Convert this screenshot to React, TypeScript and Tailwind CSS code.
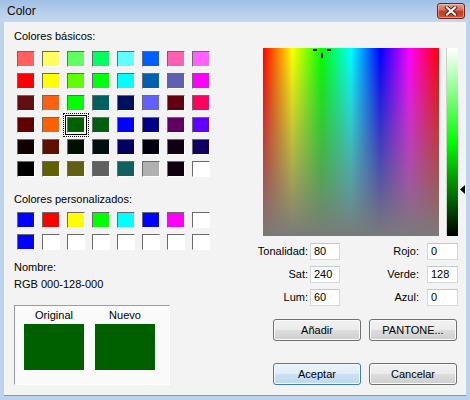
import React from "react";

const basic: string[][] = [
  ["bg-[#ff6060]", "bg-[#ffff60]", "bg-[#60ff60]", "bg-[#00ff60]", "bg-[#60ffff]", "bg-[#0060ff]", "bg-[#ff60b0]", "bg-[#ff60ff]"],
  ["bg-[#ff0000]", "bg-[#ffff00]", "bg-[#60ff00]", "bg-[#00ff10]", "bg-[#00ffff]", "bg-[#0060b0]", "bg-[#6060b0]", "bg-[#ff00ff]"],
  ["bg-[#601010]", "bg-[#ff6010]", "bg-[#00ff00]", "bg-[#006060]", "bg-[#001060]", "bg-[#6060ff]", "bg-[#600010]", "bg-[#ff0060]"],
  ["bg-[#600000]", "bg-[#ff6000]", "bg-[#006000]", "bg-[#006010]", "bg-[#0000ff]", "bg-[#000088]", "bg-[#600060]", "bg-[#6000ff]"],
  ["bg-[#100000]", "bg-[#601000]", "bg-[#001000]", "bg-[#001010]", "bg-[#000060]", "bg-[#000010]", "bg-[#100010]", "bg-[#100060]"],
  ["bg-[#000000]", "bg-[#606000]", "bg-[#606010]", "bg-[#606060]", "bg-[#106060]", "bg-[#b0b0b0]", "bg-[#100010]", "bg-[#ffffff]"],
];

const custom: string[][] = [
  ["bg-[#0000ff]", "bg-[#ff0000]", "bg-[#ffff00]", "bg-[#00ff00]", "bg-[#00ffff]", "bg-[#0000ff]", "bg-[#ff00ff]", "bg-white"],
  ["bg-[#0000ff]", "bg-white", "bg-white", "bg-white", "bg-white", "bg-white", "bg-white", "bg-white"],
];

function Swatch({ cls, selected }: { cls: string; selected?: boolean }) {
  return (
    <div
      className={`relative w-[18px] h-[16px] border border-t-[#6a6a6a] border-l-[#6a6a6a] border-b-white border-r-white ${cls}`}
    >
      {selected && (
        <>
          <div className="absolute -inset-[3px] border border-black" />
          <div className="absolute -inset-[5px] border border-dotted border-black" />
        </>
      )}
    </div>
  );
}

function Grid({ rows, selected }: { rows: string[][]; selected?: [number, number] }) {
  return (
    <div className="ml-[3px] grid grid-cols-[repeat(8,18px)] gap-x-[7px] gap-y-[6px]">
      {rows.map((r, i) =>
        r.map((c, j) => (
          <Swatch key={`${i}-${j}`} cls={c} selected={!!selected && selected[0] === i && selected[1] === j} />
        ))
      )}
    </div>
  );
}

function Field({ value, w }: { value: string; w: string }) {
  return (
    <div className={`${w} h-[17px] bg-white border border-[#d4d8dd] border-t-[#c5c9cf] pl-[3px] leading-[15px]`}>
      {value}
    </div>
  );
}

function Btn({ label, primary }: { label: string; primary?: boolean }) {
  return (
    <div
      className={
        primary
          ? "w-[88px] h-[22px] rounded-[3px] border border-[#3c7fb1] bg-[linear-gradient(to_bottom,#eaf3fb_0%,#e0edf8_50%,#cde1f2_50%,#bed8ee_100%)] shadow-[inset_0_0_0_1px_#f4f9fd] flex items-center justify-center"
          : "w-[88px] h-[22px] rounded-[3px] border border-[#707070] bg-[linear-gradient(to_bottom,#f2f2f2_0%,#ebebeb_50%,#dddddd_50%,#cfcfcf_100%)] shadow-[inset_0_0_0_1px_#fbfbfb] flex items-center justify-center"
      }
    >
      {label}
    </div>
  );
}

export default function App() {
  return (
    <div className="w-[470px] h-[400px] flex flex-col bg-[#bcd3ee] font-['Liberation_Sans',Arial,sans-serif] text-[11px] text-black overflow-hidden">
      {/* Title bar */}
      <div className="h-[22px] shrink-0 flex items-center justify-between bg-[linear-gradient(to_bottom,#9fbfe5,#b9d0ec_60%,#c3d8f0)]">
        <span className="ml-[7px] text-[12px] text-[#0b0b0b]">Color</span>
        <div className="mr-[5px] w-[28px] h-[16px] rounded-[3px] border border-[#6e2417] bg-[linear-gradient(to_bottom,#e7a08e_0%,#d9705a_40%,#c23b22_55%,#cf5637_100%)] shadow-[inset_0_0_0_1px_rgba(255,210,200,0.5)] flex items-center justify-center">
          <svg width="14" height="10" viewBox="0 0 14 10">
            <path d="M3 1.5 L11 8.5 M11 1.5 L3 8.5" stroke="#4a140c" strokeWidth="3.8" strokeLinecap="square" />
            <path d="M3 1.5 L11 8.5 M11 1.5 L3 8.5" stroke="#ffffff" strokeWidth="2.2" strokeLinecap="square" />
          </svg>
        </div>
      </div>

      {/* Body */}
      <div className="mx-[4px] mb-[4px] flex-1 flex bg-[#f3f3f3] border-b border-[#6f98c2]">
        {/* Left column */}
        <div className="w-[236px] pl-[10px] pt-[7px] flex flex-col">
          <div className="leading-[15px]">Colores básicos:</div>
          <div className="mt-[7px]">
            <Grid rows={basic} selected={[3, 2]} />
          </div>
          <div className="mt-[15px] leading-[15px]">Colores personalizados:</div>
          <div className="mt-[5px]">
            <Grid rows={custom} />
          </div>
          <div className="mt-[10px] leading-[15px]">Nombre:</div>
          <div className="mt-[2px] leading-[15px]">RGB 000-128-000</div>
          <div className="mt-[13px] w-[156px] h-[80px] border border-t-[#9c9c9c] border-l-[#9c9c9c] border-r-white border-b-white bg-[#fafafa] pl-[9px] pt-[2px] flex gap-[11px]">
            <div className="w-[60px] flex flex-col items-center">
              <div className="leading-[15px]">Original</div>
              <div className="mt-[1px] w-[60px] h-[46px] bg-[#006000]" />
            </div>
            <div className="w-[60px] flex flex-col items-center">
              <div className="leading-[15px]">Nuevo</div>
              <div className="mt-[1px] w-[60px] h-[46px] bg-[#006000]" />
            </div>
          </div>
        </div>

        {/* Right column */}
        <div className="flex-1 flex flex-col">
          <div className="mt-[26px] ml-[23px] flex">
            <div className="relative w-[176px] h-[188px] bg-[linear-gradient(to_right,#ff0000,#ffff00,#00ff00,#00ffff,#0000ff,#ff00ff,#ff0000)]">
              <div className="w-full h-full bg-[linear-gradient(to_bottom,rgba(128,128,128,0),#7a7a7a)]" />
              <div className="absolute left-[50px] top-[1px] w-[4px] h-[2px] bg-black" />
              <div className="absolute left-[64px] top-[1px] w-[4px] h-[2px] bg-black" />
              <div className="absolute left-[58px] top-[5px] w-[2px] h-[5px] bg-black" />
            </div>
            <div className="ml-[7px] w-[12px] h-[188px] border-l border-[#d0d0d0] bg-[linear-gradient(to_bottom,#ffffff,#00ff00_50%,#000000)]" />
            <div className="ml-[2px] pt-[137px]">
              <svg width="5" height="9" viewBox="0 0 5 9">
                <path d="M0 4.5 L5 0 L5 9 Z" fill="#000" />
              </svg>
            </div>
          </div>

          <div className="mt-[7px] flex flex-col gap-[6px]">
            {[
              ["Tonalidad:", "80", "Rojo:", "0"],
              ["Sat:", "240", "Verde:", "128"],
              ["Lum:", "60", "Azul:", "0"],
            ].map((r) => (
              <div key={r[0]} className="h-[17px] flex items-center">
                <span className="w-[68px] text-right">{r[0]}</span>
                <div className="ml-[2px]">
                  <Field value={r[1]} w="w-[30px]" />
                </div>
                <span className="w-[79px] text-right">{r[2]}</span>
                <div className="ml-[8px]">
                  <Field value={r[3]} w="w-[31px]" />
                </div>
              </div>
            ))}
          </div>

          <div className="mt-[13px] ml-[33px] flex gap-[8px]">
            <Btn label="Añadir" />
            <Btn label="PANTONE..." />
          </div>
          <div className="mt-[22px] ml-[33px] flex gap-[8px]">
            <Btn label="Aceptar" primary />
            <Btn label="Cancelar" />
          </div>
        </div>
      </div>
    </div>
  );
}
